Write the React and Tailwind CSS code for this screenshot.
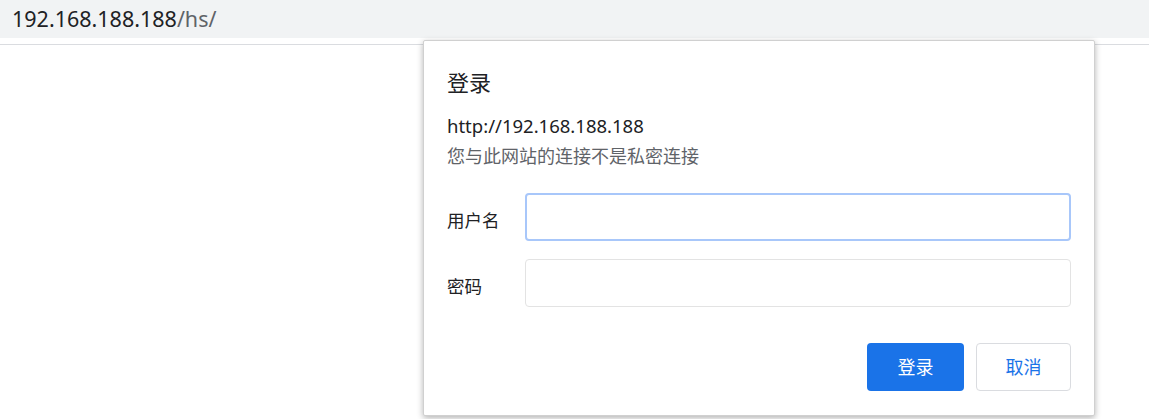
import React from "react";

export default function App() {
  const font = { fontFamily: '"Noto Sans", "Noto Sans CJK SC", sans-serif' };
  return (
    <div className="relative w-[1149px] h-[419px] bg-white overflow-hidden" style={font}>
      <div className="h-[38px] bg-[#f1f3f4] flex items-center pl-[12px] text-[21.5px] text-[#202124]">
        <span>192.168.188.188</span>
        <span className="text-[#5f6368]">/hs/</span>
      </div>
      <div className="h-[6px]" />
      <div className="h-px bg-[#dadce0]" />

      <div className="absolute left-[423px] top-[40px] w-[672px] h-[376px] bg-white rounded-[2px] border border-[#d0d0d0] shadow-[0_2px_6px_rgba(0,0,0,0.3)] pl-[23px] pr-[23px] pt-[26px] flex flex-col">
        <div className="text-[22px] leading-[30px] text-[#202124]">登录</div>
        <div className="mt-[17px] text-[18.5px] leading-[24px] text-[#202124]">http://192.168.188.188</div>
        <div className="mt-[6px] text-[18px] leading-[24px] text-[#5f6368]">您与此网站的连接不是私密连接</div>
        <div className="mt-[25px] flex items-center">
          <div className="w-[78px] text-[17.5px] text-[#202124] pt-[6px]">用户名</div>
          <div className="flex-1 h-[48px] rounded-[4px] border-2 border-[#a8c7fa]" />
        </div>
        <div className="mt-[18px] flex items-center">
          <div className="w-[78px] text-[17.5px] text-[#202124] pt-[6px]">密码</div>
          <div className="flex-1 h-[48px] rounded-[4px] border border-[#e3e3e3]" />
        </div>
        <div className="mt-[36px] flex justify-end gap-[12px]">
          <div className="w-[97px] h-[48px] rounded-[4px] bg-[#1a73e8] text-white text-[18px] flex items-center justify-center">登录</div>
          <div className="w-[95px] h-[48px] rounded-[4px] border border-[#dadce0] text-[#1a73e8] text-[18px] flex items-center justify-center">取消</div>
        </div>
      </div>
    </div>
  );
}
